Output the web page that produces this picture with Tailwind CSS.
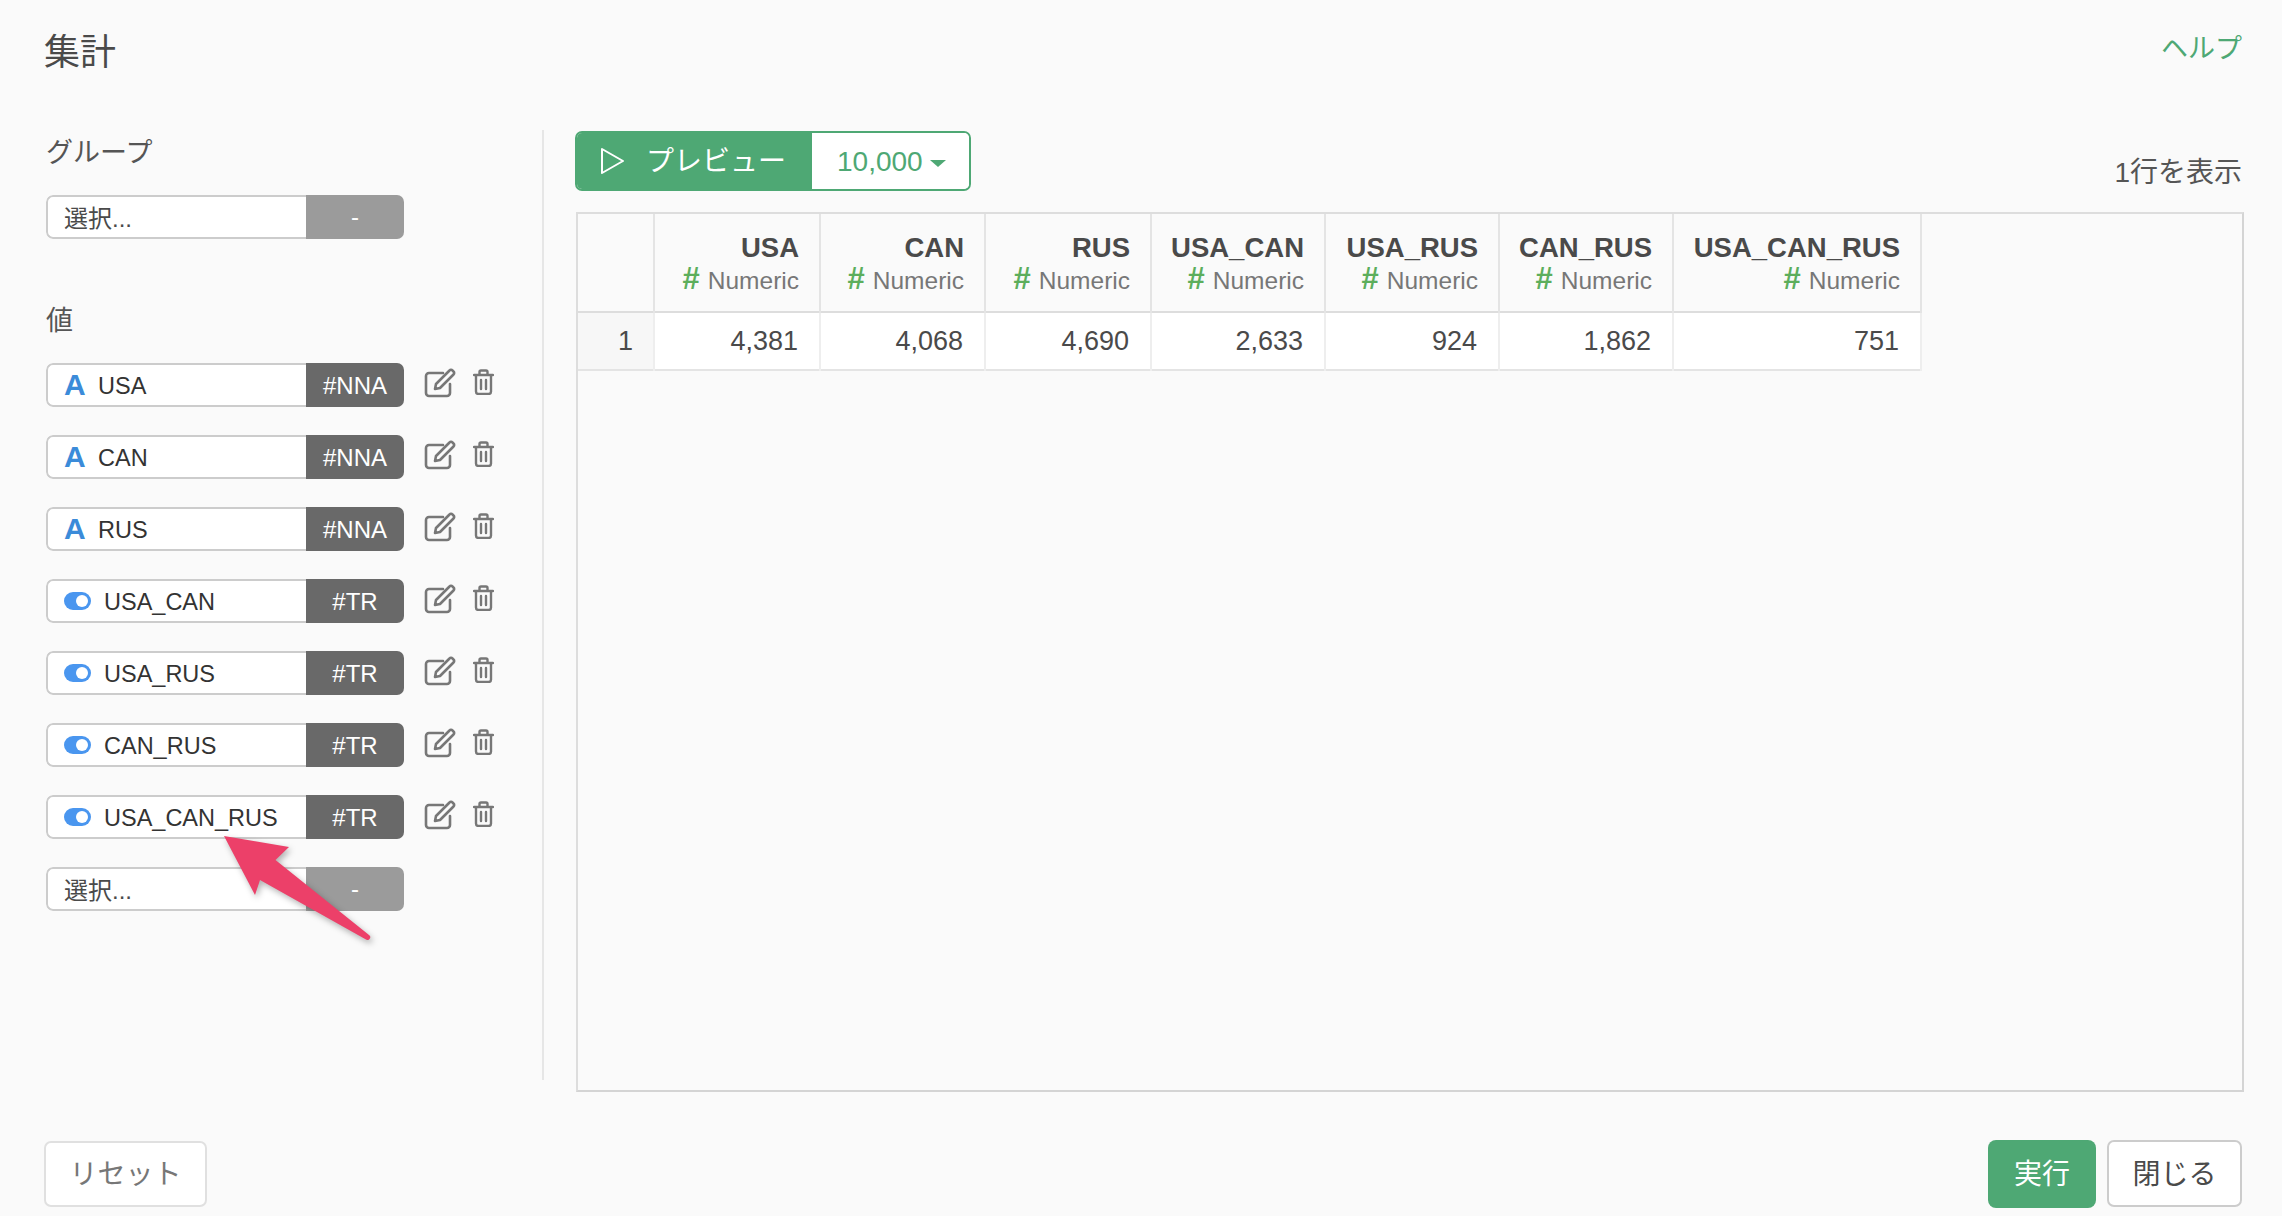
<!DOCTYPE html>
<html lang="ja">
<head>
  <meta charset="UTF-8">
  <title>集計</title>
  <script src="https://cdn.jsdelivr.net/npm/@tailwindcss/browser@4"></script>
</head>
<body class="bg-[#fafafa] font-['Liberation_Sans','Noto_Sans_CJK_JP',sans-serif] text-[#4a4a4a]">
  <div class="relative w-[2282px] h-[1216px] overflow-hidden flex flex-col">

    <!-- header -->
    <header class="h-[130px] pl-[44px] pr-[40px] pt-[30px] flex justify-between items-start shrink-0">
      <h1 class="text-[36px] leading-[46px] font-normal">集計</h1>
      <a class="text-[27px] leading-[36px] text-[#4ea874] pt-[1px]">ヘルプ</a>
    </header>

    <div class="flex h-[950px] shrink-0">
      <!-- left column -->
      <aside class="w-[544px] h-[950px] pl-[46px] border-r-2 border-[#e6e6e6] shrink-0">
        <h2 class="pt-[6px] text-[27px] leading-[35px] font-normal text-[#555]">グループ</h2>
        <div class="mt-[24px] flex w-[358px] h-[44px] rounded-[7px] overflow-hidden">
          <div class="w-[260px] bg-white border-2 border-r-0 border-[#ccc] rounded-l-[7px] pl-[16px] pt-[3px] text-[24px] leading-[38px]">選択...</div>
          <div class="flex-1 bg-[#9b9b9b] text-white text-[24px] leading-[44px] text-center">-</div>
        </div>

        <h2 class="mt-[59px] pt-[6px] text-[27px] leading-[35px] font-normal text-[#555]">値</h2>

        <div id="value-rows" class="mt-[24px] flex flex-col gap-[28px]"></div>

        <div class="mt-[28px] flex w-[358px] h-[44px] rounded-[7px] overflow-hidden">
          <div class="w-[260px] bg-white border-2 border-r-0 border-[#ccc] rounded-l-[7px] pl-[16px] pt-[3px] text-[24px] leading-[38px]">選択...</div>
          <div class="flex-1 bg-[#9b9b9b] text-white text-[24px] leading-[44px] text-center">-</div>
        </div>
      </aside>

      <!-- preview column -->
      <main class="w-[1668px] h-[962px] ml-[32px] shrink-0 flex flex-col">
        <div class="flex justify-between items-start h-[82px] shrink-0">
          <div class="flex w-[396px] h-[60px] rounded-[7px] border-2 border-[#4ea874] overflow-hidden mt-[1px] -ml-[1px]">
            <div class="w-[235px] bg-[#4ea874] text-white text-[28px] flex items-center pl-[23px] gap-[21px]">
              <svg width="25" height="28" viewBox="0 0 25 28" fill="none" stroke="#fff" stroke-width="2" stroke-linejoin="round"><path d="M2 2 23 14 2 26z"/></svg>
              <span class="pt-[1px]">プレビュー</span>
            </div>
            <div class="flex-1 bg-white text-[#4ea874] text-[28px] pt-[1px] flex items-center pl-[25px]">
              10,000<span class="ml-[7px] mt-[3px] w-0 h-0 border-x-[8px] border-x-transparent border-t-[7px] border-t-[#4ea874]"></span>
            </div>
          </div>
          <span class="text-[28px] leading-[34px] text-[#555] mt-[26px] mr-[2px]">1行を表示</span>
        </div>

        <div class="w-[1668px] h-[880px] border-2 border-[#ddd] border-r-[#d4d4d4] border-b-[#d4d4d4] overflow-hidden">
          <table class="table-fixed border-collapse w-[1343px]">
            <colgroup>
              <col class="w-[76px]"><col class="w-[166px]"><col class="w-[165px]"><col class="w-[166px]"><col class="w-[174px]"><col class="w-[174px]"><col class="w-[174px]"><col class="w-[248px]">
            </colgroup>
            <thead>
              <tr id="head-row" class="h-[98px] border-b-2 border-[#ddd] text-right align-top">
                <th class="border-r-2 border-[#e4e4e4]"></th>
              </tr>
            </thead>
            <tbody>
              <tr id="body-row" class="h-[58px] border-b-2 border-[#e4e4e4] text-right text-[27px]">
                <td class="bg-[#f7f7f7] border-r-2 border-[#eee] pr-[20px] pt-[1px]">1</td>
              </tr>
            </tbody>
          </table>
        </div>
      </main>
    </div>

    <!-- footer -->
    <footer class="flex justify-between items-start pl-[44px] pr-[40px] pt-[61px]">
      <button class="w-[163px] h-[66px] pt-[2px] bg-white border-2 border-[#e0e0e0] rounded-[7px] text-[28px] text-[#777]">リセット</button>
      <div class="flex gap-[11px] -mt-[1px]">
        <button class="w-[108px] h-[68px] pt-[2px] bg-[#4ea874] rounded-[8px] text-white text-[28px]">実行</button>
        <button class="w-[135px] h-[67px] pt-[2px] bg-white border-2 border-[#ccc] rounded-[7px] text-[28px] text-[#4a4a4a]">閉じる</button>
      </div>
    </footer>

    <!-- annotation arrow -->
    <svg class="absolute left-[210px] top-[825px] drop-shadow-[2px_3px_3px_rgba(0,0,0,0.3)]" width="170" height="125" viewBox="210 825 170 125">
      <path d="M224 836 289 847 275.500 860 369 935a2.500 2.500 0 0 1-3 4.500L260 880 255 895z" fill="#ec4069"/>
    </svg>
  </div>

  <script>
    const textIcon = '<span class="font-[\'Liberation_Serif\',serif] font-bold text-[30px] leading-[40px] text-[#3b8bd9] w-[34px]">A</span>';
    const toggleIcon = '<span class="relative w-[27px] h-[18px] rounded-full bg-[#4a96ef] mr-[13px]"><span class="absolute right-[3px] top-[3px] w-[12px] h-[12px] rounded-full bg-white"></span></span>';
    const editIcon = '<svg class="ml-[20px] -mt-[5px]" width="32" height="30" viewBox="0 0 32 30" fill="none" stroke="#777" stroke-width="2.600" stroke-linejoin="round" stroke-linecap="round"><path d="M19 5H5a3 3 0 0 0-3 3v17a3 3 0 0 0 3 3h18a3 3 0 0 0 3-3V16"/><path d="M12 16 25.500 2.500a2 2 0 0 1 3 0l1 1a2 2 0 0 1 0 3L16 20l-5 1z"/></svg>';
    const trashIcon = '<svg class="ml-[17px] -mt-[7px]" width="21" height="26" viewBox="0 0 21 26" fill="none" stroke="#777" stroke-width="2.400" stroke-linejoin="round" stroke-linecap="round"><path d="M1 6h19M6.500 6V3a1.500 1.500 0 0 1 1.500-1.500h5A1.500 1.500 0 0 1 14.500 3v3M3 6v16.500A2.500 2.500 0 0 0 5.500 25h10a2.500 2.500 0 0 0 2.500-2.500V6M8 11v9M13 11v9"/></svg>';

    const values = [
      ['USA', '#NNA', textIcon], ['CAN', '#NNA', textIcon], ['RUS', '#NNA', textIcon],
      ['USA_CAN', '#TR', toggleIcon], ['USA_RUS', '#TR', toggleIcon], ['CAN_RUS', '#TR', toggleIcon], ['USA_CAN_RUS', '#TR', toggleIcon]
    ];
    document.getElementById('value-rows').innerHTML = values.map(([name, tag, icon]) => `
      <div class="flex items-center h-[44px]">
        <div class="flex w-[358px] h-[44px] rounded-[7px] overflow-hidden">
          <div class="w-[260px] bg-white border-2 border-r-0 border-[#ccc] rounded-l-[7px] pl-[16px] flex items-center text-[23.500px] text-[#333]">${icon}<span class="pt-[4px]">${name}</span></div>
          <div class="flex-1 bg-[#696969] text-white text-[24px] leading-[46px] text-center">${tag}</div>
        </div>
        ${editIcon}${trashIcon}
      </div>`).join('');

    const columns = [
      ['USA', '4,381'], ['CAN', '4,068'], ['RUS', '4,690'], ['USA_CAN', '2,633'],
      ['USA_RUS', '924'], ['CAN_RUS', '1,862'], ['USA_CAN_RUS', '751']
    ];
    document.getElementById('head-row').insertAdjacentHTML('beforeend', columns.map(([name]) => `
      <th class="border-r-2 border-[#e4e4e4] pr-[20px] pt-[16px] font-normal"><div class="text-[27.500px] leading-[35px] font-bold">${name}</div><div class="text-[24.500px] leading-[32px] text-[#777]"><span class="text-[#5cae5c] text-[31px] leading-[20px] font-bold mr-[8px]">#</span>Numeric</div></th>`).join(''));
    document.getElementById('body-row').insertAdjacentHTML('beforeend', columns.map(([, value]) => `
      <td class="bg-white border-r-2 border-[#eee] pr-[21px] pt-[1px]">${value}</td>`).join(''));
  </script>
</body>
</html>
